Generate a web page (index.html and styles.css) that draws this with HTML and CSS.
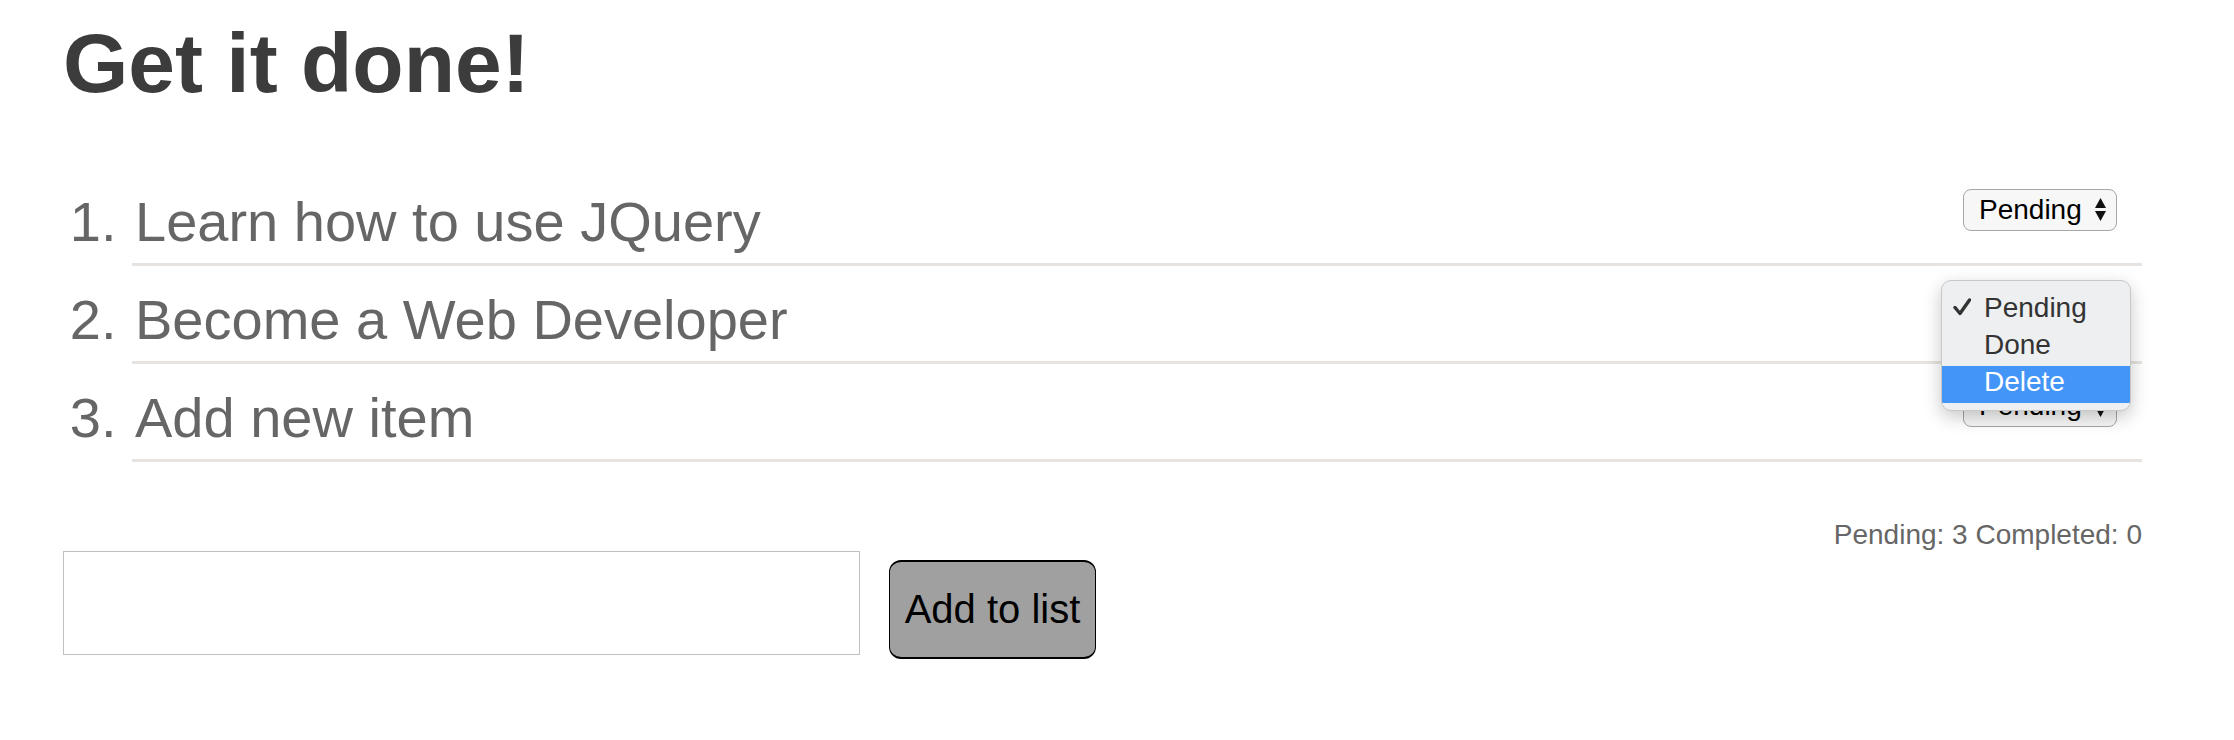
FILE: index.html
```html
<!DOCTYPE html>
<html lang="en">
<head>
<meta charset="utf-8">
<title>Get it done!</title>
<link rel="stylesheet" href="styles.css">
</head>
<body>
<div class="app">
  <h1 class="title">Get it done!</h1>
  <ol class="todo-list">
    <li class="todo-item">
      <div class="status-select">
        <span class="status-select__label">Pending</span>
        <svg class="status-select__arrows" viewBox="0 0 11 24" width="11" height="24"><polygon points="5.5,0 11,10 0,10"/><polygon points="0,13 11,13 5.5,23"/></svg>
      </div>
      <span class="todo-item__text">Learn how to use JQuery</span>
    </li>
    <li class="todo-item">
      <div class="status-select">
        <span class="status-select__label">Pending</span>
        <svg class="status-select__arrows" viewBox="0 0 11 24" width="11" height="24"><polygon points="5.5,0 11,10 0,10"/><polygon points="0,13 11,13 5.5,23"/></svg>
        <div class="menu">
          <div class="menu__item">
            <svg class="menu__check" viewBox="0 0 18 18" width="18" height="18"><polyline points="2,9.5 7,15.5 16.5,2"/></svg>
            <span>Pending</span>
          </div>
          <div class="menu__item"><span>Done</span></div>
          <div class="menu__item menu__item--active"><span>Delete</span></div>
        </div>
      </div>
      <span class="todo-item__text">Become a Web Developer</span>
    </li>
    <li class="todo-item">
      <div class="status-select">
        <span class="status-select__label">Pending</span>
        <svg class="status-select__arrows" viewBox="0 0 11 24" width="11" height="24"><polygon points="5.5,0 11,10 0,10"/><polygon points="0,13 11,13 5.5,23"/></svg>
      </div>
      <span class="todo-item__text">Add new item</span>
    </li>
  </ol>
  <div class="counts">Pending: 3 Completed: 0</div>
  <form class="add-form">
    <input class="add-form__input" type="text">
    <button class="add-form__button" type="button">Add to list</button>
  </form>
</div>
</body>
</html>
```
FILE: styles.css
```css
html, body {
  margin: 0;
  padding: 0;
  background: #ffffff;
}

body {
  font-family: "Liberation Sans", Arial, Helvetica, sans-serif;
}

.app {
  padding: 0 92px 0 63px;
}

.title {
  margin: 13px 0 0;
  font-size: 84px;
  line-height: 100px;
  font-weight: bold;
  color: #3c3c3c;
}

.todo-list {
  margin: 55px 0 0;
  padding: 0 0 0 69px;
  color: #666666;
}

.todo-item {
  font-size: 56px;
  line-height: 64px;
  padding: 22px 0 9px;
  border-bottom: 3px solid #e6e3e0;
}

.todo-item::marker {
  color: #666666;
}

.todo-item__text {
  padding-left: 3px;
}

.status-select {
  float: right;
  position: relative;
  margin: -1px 25px 0 0;
  box-sizing: border-box;
  width: 154px;
  height: 42px;
  padding: 0 10px 0 15px;
  border: 1.5px solid #a6a6a6;
  border-radius: 8px;
  background: #f7f7f7;
  display: flex;
  align-items: center;
  justify-content: space-between;
  color: #000000;
}

.status-select__label {
  font-size: 28px;
  line-height: 32px;
}

.status-select__arrows {
  fill: #111111;
  display: block;
}

.menu {
  position: absolute;
  z-index: 10;
  left: -23px;
  top: -8px;
  box-sizing: border-box;
  width: 190px;
  height: 131px;
  padding: 11px 0 0;
  background: #edeff0;
  border: 1px solid #c8c8c8;
  border-radius: 10px;
  box-shadow: 0 6px 18px rgba(0, 0, 0, 0.22);
  overflow: hidden;
}

.menu__item {
  position: relative;
  box-sizing: border-box;
  height: 37px;
  padding: 0 0 5px 42px;
  font-size: 28px;
  line-height: 32px;
  color: #333333;
}

.menu__item--active {
  background: #4395f8;
  color: #ffffff;
}

.menu__check {
  position: absolute;
  left: 11px;
  top: 6px;
  fill: none;
  stroke: #333333;
  stroke-width: 3.4;
  stroke-linecap: round;
  stroke-linejoin: round;
}

.counts {
  margin-top: 57px;
  text-align: right;
  font-size: 28px;
  line-height: 32px;
  color: #666666;
}

.add-form {
  display: flex;
  align-items: flex-start;
  gap: 29px;
  margin: 0;
}

.add-form__input {
  box-sizing: border-box;
  width: 797px;
  height: 104px;
  margin: 0;
  border: 1px solid #c0c0c0;
  background: #ffffff;
  padding: 0 12px;
  font-size: 30px;
  font-family: "Liberation Sans", Arial, sans-serif;
  outline: none;
}

.add-form__button {
  box-sizing: border-box;
  margin-top: 9px;
  width: 207px;
  height: 99px;
  padding: 0;
  background: #a0a0a0;
  border-style: solid;
  border-color: #000000;
  border-width: 2px 1px;
  border-radius: 12px;
  font-family: "Liberation Sans", Arial, sans-serif;
  font-size: 40px;
  color: #000000;
}
```
